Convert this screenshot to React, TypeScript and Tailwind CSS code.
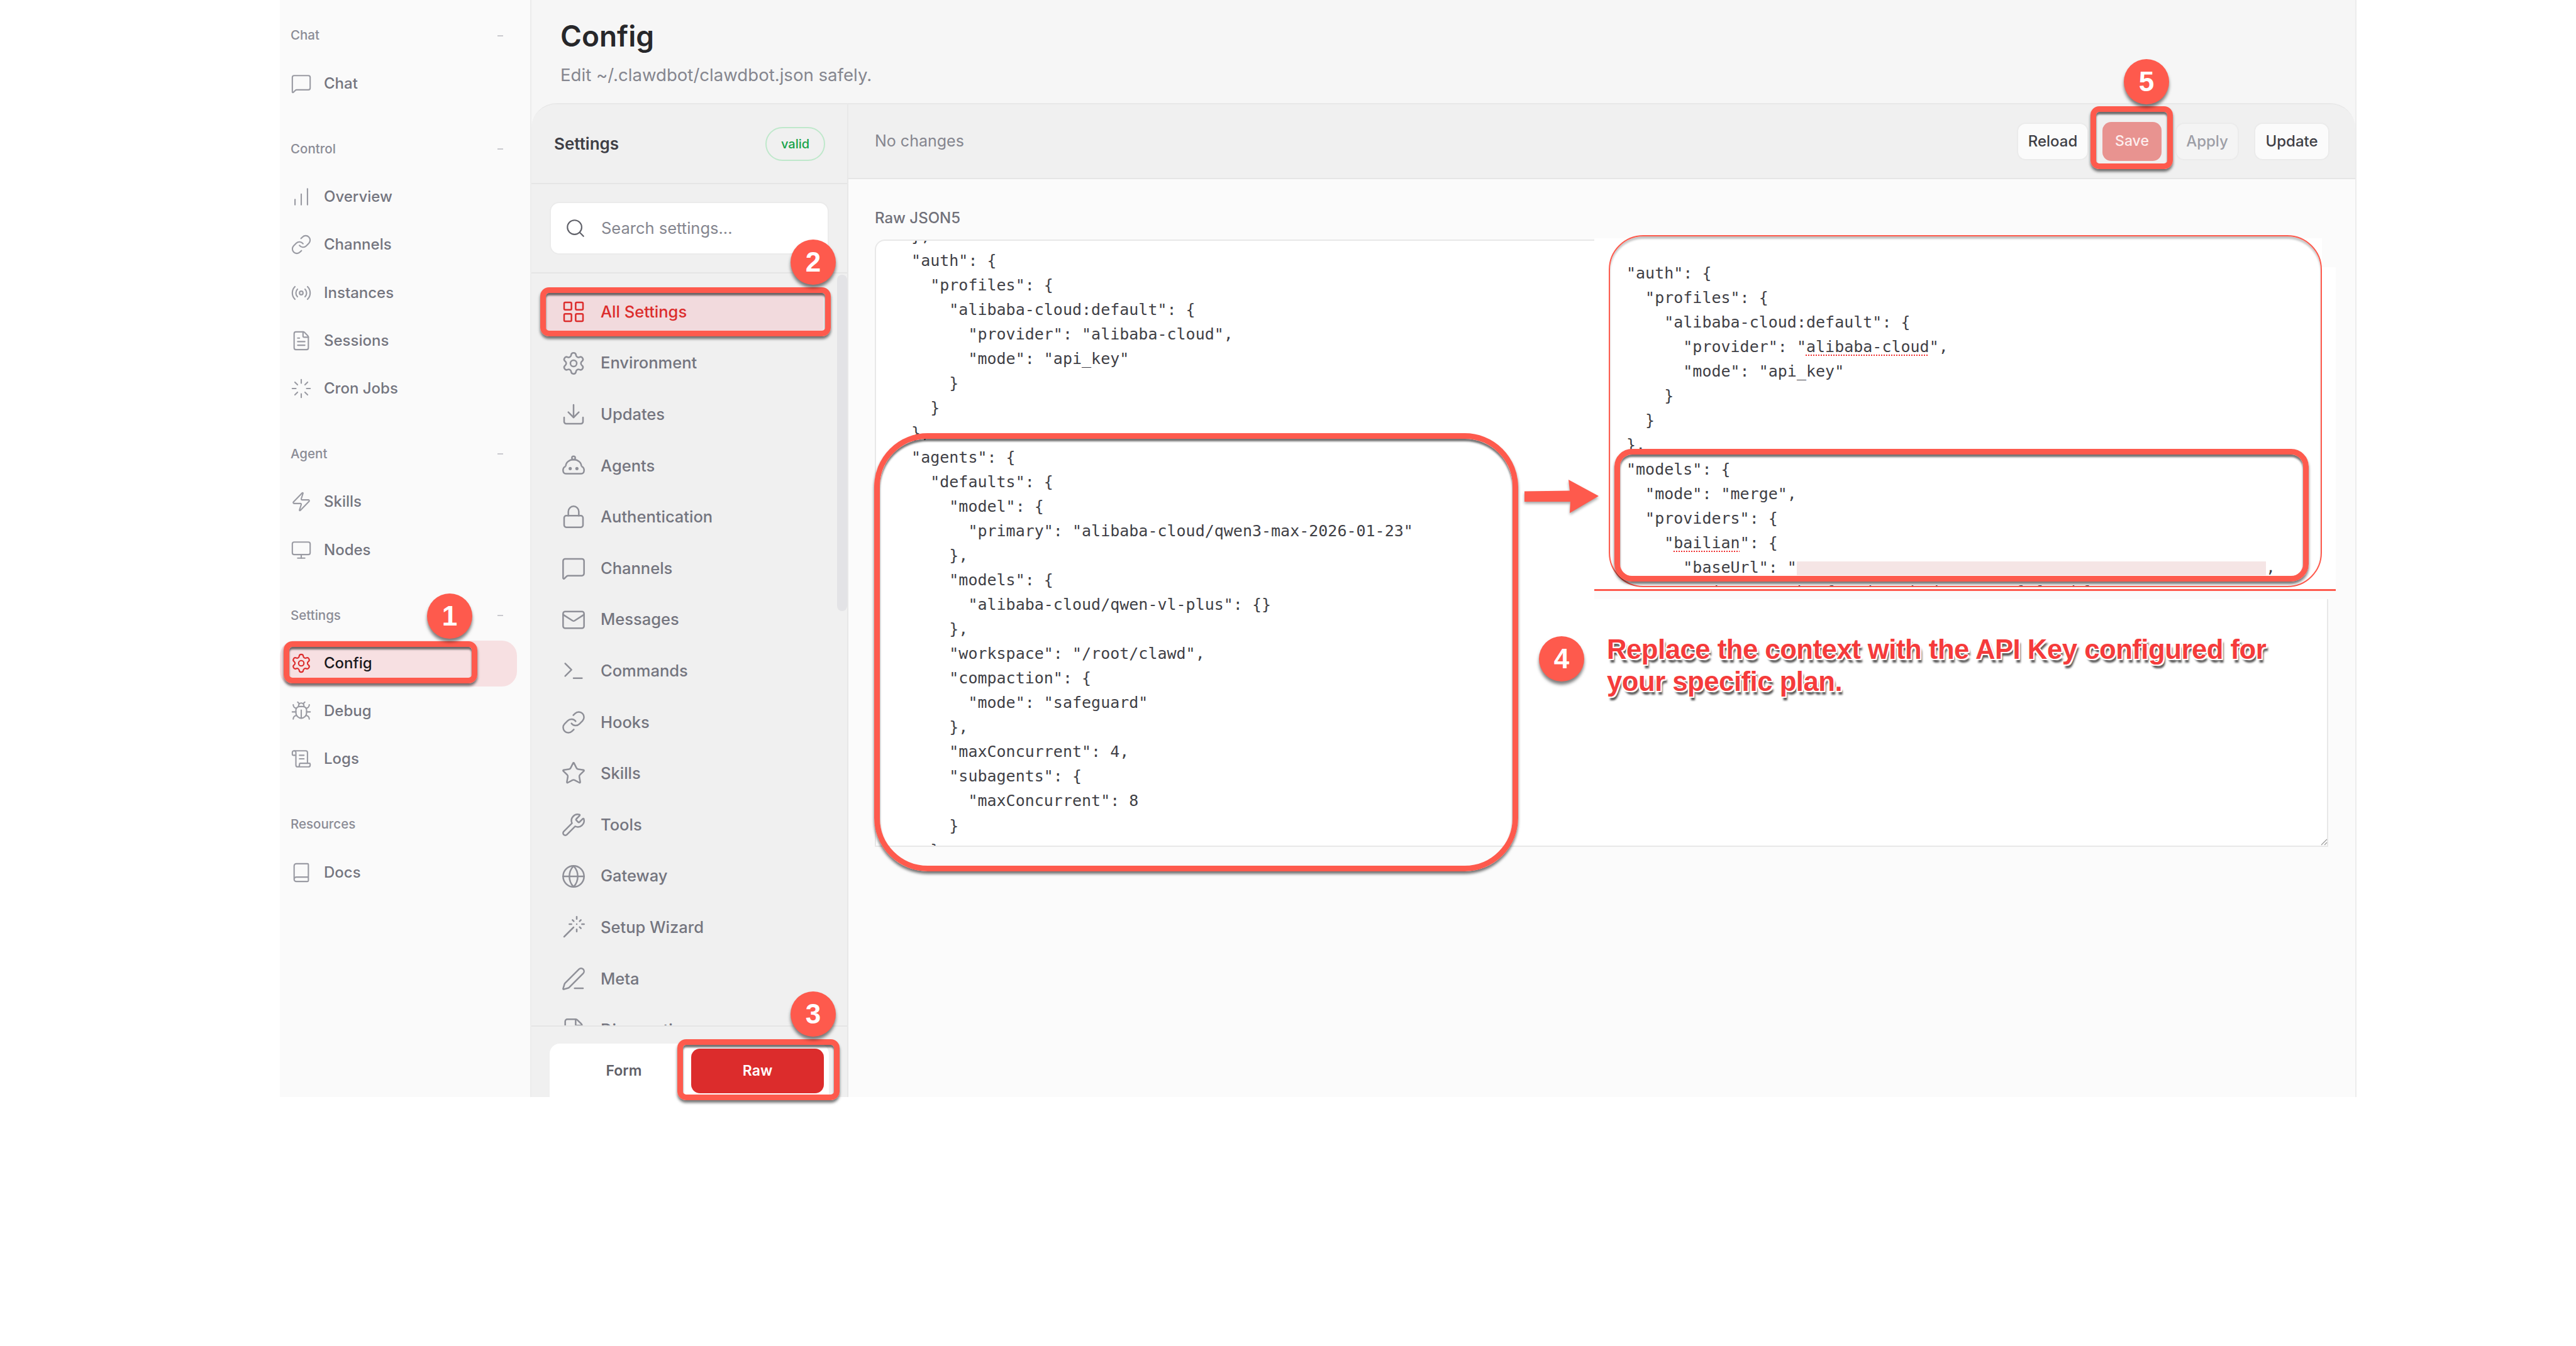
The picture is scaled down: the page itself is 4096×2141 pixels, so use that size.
import type { ReactNode } from "react";
import {
  Book,
  Bug,
  ChartNoAxesColumnIncreasing,
  FileText,
  Globe,
  LayoutGrid,
  Link,
  Loader,
  Lock,
  Mail,
  MessageSquare,
  Monitor,
  PenLine,
  Radio,
  ScrollText,
  Search,
  Settings,
  Star,
  Download,
  Terminal,
  Wand,
  Wrench,
  Zap,
} from "lucide-react";

const ui = "font-['Inter',sans-serif]";
const mono = "font-['DejaVu_Sans_Mono',monospace]";

function RobotIcon() {
  return (
    <svg viewBox="0 0 24 24" fill="none" stroke="currentColor" strokeWidth="1.5" className="size-[40px]">
      <circle cx="12" cy="4.5" r="1.6" />
      <path d="M4.5 12.5a7.5 6.5 0 0 1 15 0" />
      <path d="M4.5 12.5c-3.4 1-3.4 7 .2 7h14.6c3.6 0 3.6-6 .2-7" />
      <circle cx="8.8" cy="14.6" r=".8" fill="currentColor" />
      <circle cx="15.2" cy="14.6" r=".8" fill="currentColor" />
    </svg>
  );
}

const sideGroups = [
  {
    label: "Chat",
    items: [{ name: "Chat", icon: <MessageSquare size={34} strokeWidth={1.5} /> }],
  },
  {
    label: "Control",
    items: [
      { name: "Overview", icon: <ChartNoAxesColumnIncreasing size={34} strokeWidth={1.5} /> },
      { name: "Channels", icon: <Link size={34} strokeWidth={1.5} /> },
      { name: "Instances", icon: <Radio size={34} strokeWidth={1.5} /> },
      { name: "Sessions", icon: <FileText size={34} strokeWidth={1.5} /> },
      { name: "Cron Jobs", icon: <Loader size={34} strokeWidth={1.5} /> },
    ],
  },
  {
    label: "Agent",
    items: [
      { name: "Skills", icon: <Zap size={34} strokeWidth={1.5} /> },
      { name: "Nodes", icon: <Monitor size={34} strokeWidth={1.5} /> },
    ],
  },
  {
    label: "Settings",
    items: [
      { name: "Config", icon: <Settings size={34} strokeWidth={1.5} />, active: true },
      { name: "Debug", icon: <Bug size={34} strokeWidth={1.5} /> },
      { name: "Logs", icon: <ScrollText size={34} strokeWidth={1.5} /> },
    ],
  },
  {
    label: "Resources",
    noDash: true,
    items: [{ name: "Docs", icon: <Book size={34} strokeWidth={1.5} /> }],
  },
];

const navItems: { name: string; icon: ReactNode }[] = [
  { name: "All Settings", icon: <LayoutGrid size={40} strokeWidth={1.5} /> },
  { name: "Environment", icon: <Settings size={40} strokeWidth={1.5} /> },
  { name: "Updates", icon: <Download size={40} strokeWidth={1.5} /> },
  { name: "Agents", icon: <RobotIcon /> },
  { name: "Authentication", icon: <Lock size={40} strokeWidth={1.5} /> },
  { name: "Channels", icon: <MessageSquare size={40} strokeWidth={1.5} /> },
  { name: "Messages", icon: <Mail size={40} strokeWidth={1.5} /> },
  { name: "Commands", icon: <Terminal size={40} strokeWidth={1.5} /> },
  { name: "Hooks", icon: <Link size={40} strokeWidth={1.5} /> },
  { name: "Skills", icon: <Star size={40} strokeWidth={1.5} /> },
  { name: "Tools", icon: <Wrench size={40} strokeWidth={1.5} /> },
  { name: "Gateway", icon: <Globe size={40} strokeWidth={1.5} /> },
  { name: "Setup Wizard", icon: <Wand size={40} strokeWidth={1.5} /> },
  { name: "Meta", icon: <PenLine size={40} strokeWidth={1.5} /> },
  { name: "Diagnostics", icon: <FileText size={40} strokeWidth={1.5} /> },
];

const jsonLines = [
  '  },',
  '  "auth": {',
  '    "profiles": {',
  '      "alibaba-cloud:default": {',
  '        "provider": "alibaba-cloud",',
  '        "mode": "api_key"',
  '      }',
  '    }',
  '  },',
  '  "agents": {',
  '    "defaults": {',
  '      "model": {',
  '        "primary": "alibaba-cloud/qwen3-max-2026-01-23"',
  '      },',
  '      "models": {',
  '        "alibaba-cloud/qwen-vl-plus": {}',
  '      },',
  '      "workspace": "/root/clawd",',
  '      "compaction": {',
  '        "mode": "safeguard"',
  '      },',
  '      "maxConcurrent": 4,',
  '      "subagents": {',
  '        "maxConcurrent": 8',
  '      }',
  '    }',
];

function Sidebar() {
  return (
    <aside className="w-[400px] shrink-0 bg-[#fafafa] border-r-2 border-[#ececec] pt-[20px] flex flex-col gap-[31.3px]">
      {sideGroups.map((g) => (
        <div key={g.label} className="flex flex-col gap-[3.2px] pr-[21px]">
          <div className="h-[73px] flex items-center justify-between pl-[17px] pr-[22px] text-[20.5px] font-medium text-[#8b8c96]">
            <span>{g.label}</span>
            {!g.noDash && <span className="w-[9px] h-[2px] bg-[#c9c9ce]" />}
          </div>
          {g.items.map((it) => (
            <div
              key={it.name}
              className={
                it.active
                  ? "h-[73px] flex items-center gap-[19px] pl-[17px] rounded-[24px] bg-[#f7e0e2] text-[#18181b] text-[24px] font-medium"
                  : "h-[73px] flex items-center gap-[19px] pl-[17px] text-[#74757f] text-[24px] font-medium"
              }
            >
              <span className={it.active ? "text-[#dc2c2c]" : "text-[#9a9ba3]"}>{it.icon}</span>
              {it.name}
            </div>
          ))}
        </div>
      ))}
    </aside>
  );
}

function SettingsColumn() {
  return (
    <div className="w-[504px] shrink-0 bg-[#f0f0f0] border-r-2 border-[#e8e8e8] flex flex-col h-full">
      <div className="h-[127px] shrink-0 border-b-2 border-[#e5e5e5] flex items-center justify-between pl-[36px] pr-[35px]">
        <span className="text-[26px] font-semibold text-[#3f3f46]">Settings</span>
        <span className="w-[95px] h-[54px] rounded-full border-2 border-[#bfe8cb] flex items-center justify-center text-[20px] font-medium text-[#16a34a]">
          valid
        </span>
      </div>
      <div className="h-[142px] shrink-0 border-b-2 border-[#e5e5e5] flex items-center pl-[29px] pr-[29px]">
        <div className="w-full h-[84px] rounded-[15px] bg-white border-2 border-[#ebebeb] flex items-center gap-[24px] pl-[22px] text-[#85868f] text-[25.5px]">
          <Search size={34} strokeWidth={1.5} className="text-[#5f6068]" />
          Search settings...
        </div>
      </div>
      <div className="relative flex-1 overflow-hidden pt-[24px] pl-[22px] pr-[38px] flex flex-col gap-[7.6px]">
        {navItems.map((n, i) => (
          <div
            key={n.name}
            className={
              i === 0
                ? "h-[74px] shrink-0 flex items-center gap-[23px] pl-[25px] rounded-[12px] bg-[#f2dadd] text-[#dc2c2c] text-[25.5px] font-medium"
                : "h-[74px] shrink-0 flex items-center gap-[23px] pl-[25px] text-[#74757f] text-[25.5px] font-medium"
            }
          >
            <span className={i === 0 ? "text-[#dc2c2c]" : "text-[#8f9098]"}>{n.icon}</span>
            {n.name}
          </div>
        ))}
        <div className="absolute right-0 top-[2px] w-[16px] h-[535px] rounded-full bg-[#e3e3e6]" />
      </div>
      <div className="h-[114px] shrink-0 border-t-2 border-[#e5e5e5] pt-[27px] pl-[29px] pr-[29px]">
        <div className="h-full rounded-t-[16px] bg-white grid grid-cols-2 gap-[4px] p-[8px] pb-[6px] text-[23px] font-semibold">
          <div className="flex items-center justify-center text-[#5f6068] pl-[8px]">Form</div>
          <div className="flex items-center justify-center rounded-[14px] bg-[#dc2c2c] text-white ml-[1px]">Raw</div>
        </div>
      </div>
    </div>
  );
}

function ToolButton({ label, muted, width }: { label: string; muted?: boolean; width: string }) {
  return (
    <div
      className={
        muted
          ? `h-[60px] flex items-center justify-center rounded-[14px] border-2 border-[#ebebeb] bg-[#f4f4f4] text-[#9d9ea6] text-[24px] font-medium ${width}`
          : `h-[60px] flex items-center justify-center rounded-[14px] border-2 border-[#ebebeb] bg-[#fbfbfb] text-[#3f3f46] text-[24px] font-medium ${width}`
      }
    >
      {label}
    </div>
  );
}

function Editor() {
  return (
    <div className="flex-1 min-w-0 flex flex-col h-full">
      <div className="h-[119px] shrink-0 bg-[#f0f0f0] border-b-2 border-[#e5e5e5] flex items-center justify-between pl-[42px] pr-[41px]">
        <span className="text-[25px] text-[#85868f]">No changes</span>
        <div className="flex items-center gap-[22px]">
          <ToolButton label="Reload" width="w-[114px]" />
          <div className="w-[94px] h-[62px] rounded-[14px] bg-[#e89390] text-[#fdeeee] text-[23px] font-medium flex items-center justify-center">
            Save
          </div>
          <ToolButton label="Apply" muted width="w-[101px]" />
          <ToolButton label="Update" width="w-[120px] ml-[2px]" />
        </div>
      </div>
      <div className="flex-1 bg-[#fbfbfb] pl-[42px] pr-[43px] pt-[47px]">
        <div className="h-[30px] leading-[30px] text-[24px] font-medium text-[#71717a] mb-[19px]">Raw JSON5</div>
        <div
          className={`h-[966px] overflow-hidden bg-white border-2 border-[#e8e8e8] rounded-tl-[16px] ${mono} text-[25px] leading-[39.07px] text-[#3f3f46] pl-[26px]`}
        >
          <pre className={`-mt-[27px] ${mono}`}>{jsonLines.join("\n")}</pre>
        </div>
      </div>
    </div>
  );
}

function PastedSnippet() {
  return (
    <div className="absolute left-[2535px] top-[379px] w-[1179px] h-[574px] bg-white">
      <div className="absolute right-0 top-0 w-[22px] h-[46px] bg-[#fbfbfb]" />
      <div className="absolute left-0 right-0 top-[558px] h-[16px] bg-[#fbfbfb]" />
      <div className="absolute left-0 right-0 top-[558px] h-[3px] bg-[#fe5a4d]" />
      <div
        className={`absolute left-[23px] top-[-5px] w-[1134px] h-[560px] rounded-[55px] border-2 border-[#fe5a4d] shadow-[inset_0_4px_3px_rgba(0,0,0,0.22)] overflow-hidden ${mono} text-[25px] leading-[39px] text-[#3f3f46]`}
      >
        <pre className={`absolute left-[26px] top-[39px] ${mono}`}>
          {'"auth": {\n  "profiles": {\n    "alibaba-cloud:default": {\n      "provider": "'}
          <span className="underline decoration-dotted decoration-2 decoration-[#ef2b2b] underline-offset-4">alibaba-cloud</span>
          {'",\n      "mode": "api_key"\n    }\n  }\n},\n"models": {\n  "mode": "merge",\n  "providers": {\n    "'}
          <span className="underline decoration-dotted decoration-2 decoration-[#ef2b2b] underline-offset-4">bailian</span>
          {'": {\n      "baseUrl": "'}
          <span className="inline-block w-[746px] h-[22px] align-middle bg-[#f5e5e5]" />
          {',\n      "apiKey": "sk-4f7a9d06e2b8d470a100cf1f700bf47"'}
        </pre>
      </div>
    </div>
  );
}

function Badge({ n, className }: { n: string; className: string }) {
  return (
    <div
      className={`absolute size-[72px] rounded-full bg-[#fe5a4d] text-white flex items-center justify-center font-['Liberation_Sans',sans-serif] font-bold text-[44px] shadow-[0_5px_5px_rgba(0,0,0,0.5)] ${className}`}
    >
      {n}
    </div>
  );
}

const boxBase =
  "absolute border-[9px] border-[#fe5a4d] shadow-[0_4px_4px_rgba(0,0,0,0.55),inset_0_4px_3px_rgba(0,0,0,0.55)]";

function Annotations() {
  return (
    <>
      <PastedSnippet />
      <div className={`${boxBase} left-[451px] top-[1020px] w-[308px] h-[67px] rounded-[14px]`} />
      <div className={`${boxBase} left-[859px] top-[457px] w-[462px] h-[78px] rounded-[14px]`} />
      <div className={`${boxBase} left-[1077px] top-[1653px] w-[258px] h-[97px] rounded-[14px]`} />
      <div className={`${boxBase} left-[3324px] top-[169px] w-[131px] h-[100px] rounded-[14px]`} />
      <div className={`${boxBase} left-[1390px] top-[689px] w-[1024px] h-[697px] rounded-[85px]`} />
      <div className={`${boxBase} left-[2567px] top-[714px] w-[1104px] h-[211px] rounded-[28px]`} />
      <Badge n="1" className="left-[679px] top-[944px]" />
      <Badge n="2" className="left-[1257px] top-[381px]" />
      <Badge n="3" className="left-[1257px] top-[1577px]" />
      <Badge n="4" className="left-[2447px] top-[1012px]" />
      <Badge n="5" className="left-[3377px] top-[94px]" />
      <svg viewBox="0 0 118 53" className="absolute left-[2424px] top-[763px] w-[118px] h-[53px] drop-shadow-[0_3px_2px_rgba(0,0,0,0.35)]">
        <path d="M0 18.5 L72 17.5 L70 0 L118 26 L72 53 L73 35 L0 35 Z" fill="#fe5a4d" />
      </svg>
      <div className="absolute left-[2555px] top-[1007px] w-[1090px] font-['Liberation_Sans',sans-serif] font-bold text-[43.7px] leading-[51px] tracking-[-0.5px] text-[#f53b3b] [text-shadow:2px_0_0_#fff,-2px_0_0_#fff,0_2px_0_#fff,0_-2px_0_#fff,2px_2px_0_#fff,-2px_2px_0_#fff,3px_6px_3px_#555]">
        Replace the context with the API Key configured for your specific plan.
      </div>
      <svg viewBox="0 0 16 16" className="absolute left-[3685px] top-[1329px] size-[16px]" stroke="#9a9a9a" strokeWidth="1.2">
        <path d="M6 15 L15 6 M11 15 L15 11" />
      </svg>
    </>
  );
}

export default function App() {
  return (
    <div className={`relative w-[4096px] h-[2141px] bg-white overflow-hidden ${ui}`}>
      <div className="ml-[445px] w-[3302px] h-[1745px] flex overflow-hidden">
        <Sidebar />
        <main className="flex-1 min-w-0 bg-[#f6f6f6] border-r-2 border-[#ececec] flex flex-col">
          <header className="h-[164px] shrink-0 pl-[46px] pt-[21px]">
            <h1 className="text-[46px] leading-[72px] font-semibold text-[#27272a]">Config</h1>
            <p className="mt-[8px] text-[27.6px] leading-[36px] text-[#85868f]">Edit ~/.clawdbot/clawdbot.json safely.</p>
          </header>
          <div className="flex-1 min-h-0 flex rounded-t-[40px] overflow-hidden border-t-2 border-[#e8e8e8]">
            <SettingsColumn />
            <Editor />
          </div>
        </main>
      </div>
      <Annotations />
    </div>
  );
}
